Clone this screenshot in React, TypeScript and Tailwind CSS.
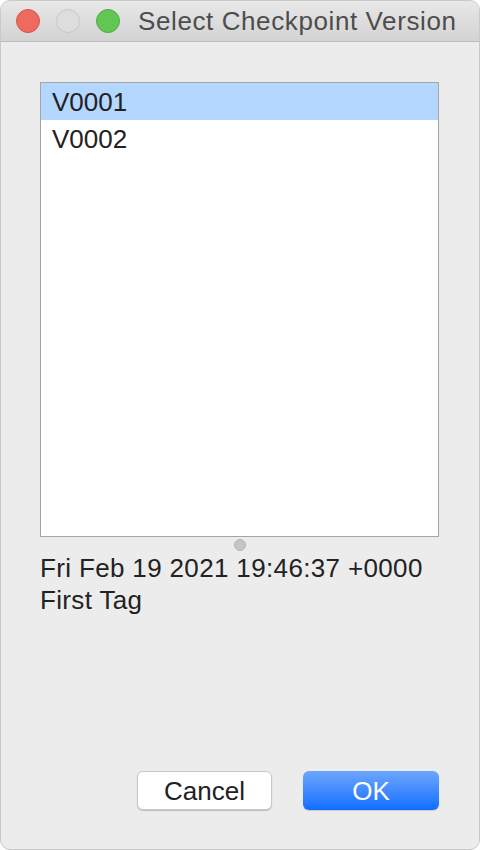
const versions = ['V0001', 'V0002'];

function TrafficLight({ color }: { color: string }) {
  return <span className={`block w-[24px] h-[24px] rounded-full border ${color}`} />;
}

export default function App() {
  return (
    <div
      className="w-[480px] h-[850px] flex flex-col bg-[#ececec] rounded-[10px] overflow-hidden border border-[#c9c9c9] text-[#222222]"
      style={{ fontFamily: '"Liberation Sans", Arial, sans-serif' }}
    >
      {/* title bar */}
      <div className="h-[41px] shrink-0 flex items-center pl-[15px] bg-gradient-to-b from-[#e9e8e9] to-[#d4d3d4] border-b border-[#bdbdbd]">
        <div className="flex items-center gap-[16px]">
          <TrafficLight color="bg-[#ee6a5f] border-[#d4554b]" />
          <TrafficLight color="bg-[#dddddd] border-[#c6c6c6]" />
          <TrafficLight color="bg-[#62c655] border-[#4fad43]" />
        </div>
        <span className="ml-[18px] text-[26px] leading-[30px] text-[#4d4d4d] tracking-[0.6px]">
          Select Checkpoint Version
        </span>
      </div>

      {/* body */}
      <div className="flex-1 flex flex-col pt-[40px] pl-[39px] pr-[40px]">
        <div className="h-[455px] bg-white border border-[#a5a5a5]">
          {versions.map((v, i) => (
            <div
              key={v}
              className={`h-[37px] pl-[11px] pt-[1px] text-[26px] leading-[36px] ${
                i === 0 ? 'bg-[#b3d7ff]' : ''
              }`}
            >
              {v}
            </div>
          ))}
        </div>

        <div className="h-[15px] flex justify-center items-center">
          <span className="block w-[12px] h-[12px] rounded-full bg-[#c6c6c6] border border-[#b3b3b3]" />
        </div>

        <div className="text-[26px] leading-[32px] tracking-[0.35px]">
          <div>Fri Feb 19 2021 19:46:37 +0000</div>
          <div>First Tag</div>
        </div>

        <div className="mt-auto mb-[39px] flex justify-end gap-[31px]">
          <button className="w-[135px] h-[39px] rounded-[6px] bg-white border border-[#c8c8c8] shadow-[0_1px_1px_rgba(0,0,0,0.2)] text-[26px] leading-none text-[#222222]">
            Cancel
          </button>
          <button className="w-[136px] h-[39px] rounded-[6px] bg-gradient-to-b from-[#6ba6fc] to-[#0b6cff] text-[26px] leading-none text-white shadow-[0_1px_1px_rgba(0,0,0,0.15)]">
            OK
          </button>
        </div>
      </div>
    </div>
  );
}
